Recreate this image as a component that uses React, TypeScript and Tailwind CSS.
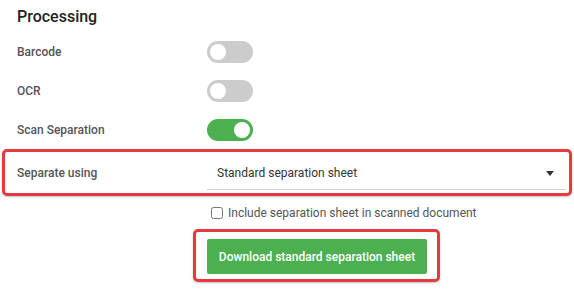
import { useState } from "react";

function Toggle({ on, onChange }: { on: boolean; onChange: () => void }) {
  return (
    <button
      onClick={onChange}
      className={`relative h-[22px] w-[46px] rounded-full ${on ? "bg-[#4caf50]" : "bg-[#cccccc]"}`}
    >
      <span
        className={`absolute top-[3px] h-[16px] w-[16px] rounded-full bg-white ${on ? "left-[27px]" : "left-[3px]"}`}
      />
    </button>
  );
}

export default function App() {
  const [barcode, setBarcode] = useState(false);
  const [ocr, setOcr] = useState(false);
  const [scanSep, setScanSep] = useState(true);
  const [include, setInclude] = useState(false);

  const rows = [
    { label: "Barcode", on: barcode, set: () => setBarcode(!barcode) },
    { label: "OCR", on: ocr, set: () => setOcr(!ocr) },
    { label: "Scan Separation", on: scanSep, set: () => setScanSep(!scanSep) },
  ];

  return (
    <div className="w-[574px] h-[289px] bg-white font-['Roboto',sans-serif] overflow-hidden">
      <h2 className="pl-[17px] pt-[5px] text-[16px] font-medium leading-[24px] text-[#222]">Processing</h2>

      <div className="mt-[3px]">
        {rows.map((r) => (
          <div key={r.label} className="flex h-[39px] items-center pl-[17px]">
            <span className="w-[190px] text-[12px] font-medium text-[#555]">{r.label}</span>
            <Toggle on={r.on} onChange={r.set} />
          </div>
        ))}
      </div>

      {/* Separate using */}
      <div className="mx-[2px] flex h-[47px] items-center rounded-[5px] border-[3px] border-[#e8393f] shadow-[0_1px_2px_rgba(0,0,0,0.25)]">
        <span className="w-[202px] pl-[12px] text-[12px] font-medium text-[#555]">Separate using</span>
        <div className="mr-[3px] flex h-[35px] flex-1 items-center justify-between border-b border-[#cfcfcf] pl-[10px] pr-[12px] pt-[2px]">
          <span className="text-[12px] text-[#333]">Standard separation sheet</span>
          <svg width="8" height="5" viewBox="0 0 8 5">
            <path d="M0 0h8L4 5z" fill="#333" />
          </svg>
        </div>
      </div>

      <label className="ml-[211px] mt-[9px] flex h-[16px] items-center gap-[5px] text-[12px] leading-[16px] text-[#555]">
        <input
          type="checkbox"
          checked={include}
          onChange={() => setInclude(!include)}
          className="h-[12px] w-[12px]"
        />
        Include separation sheet in scanned document
      </label>

      <div className="ml-[193px] mt-[8px] inline-block rounded-[5px] border-[3px] border-[#e8393f] pb-[5px] pl-[11px] pr-[10px] pt-[7px] align-top shadow-[0_1px_2px_rgba(0,0,0,0.25)]">
        <button className="block h-[35px] w-[220px] rounded-[2px] bg-[#4caf50] text-[12px] font-medium text-white">
          Download standard separation sheet
        </button>
      </div>
    </div>
  );
}
